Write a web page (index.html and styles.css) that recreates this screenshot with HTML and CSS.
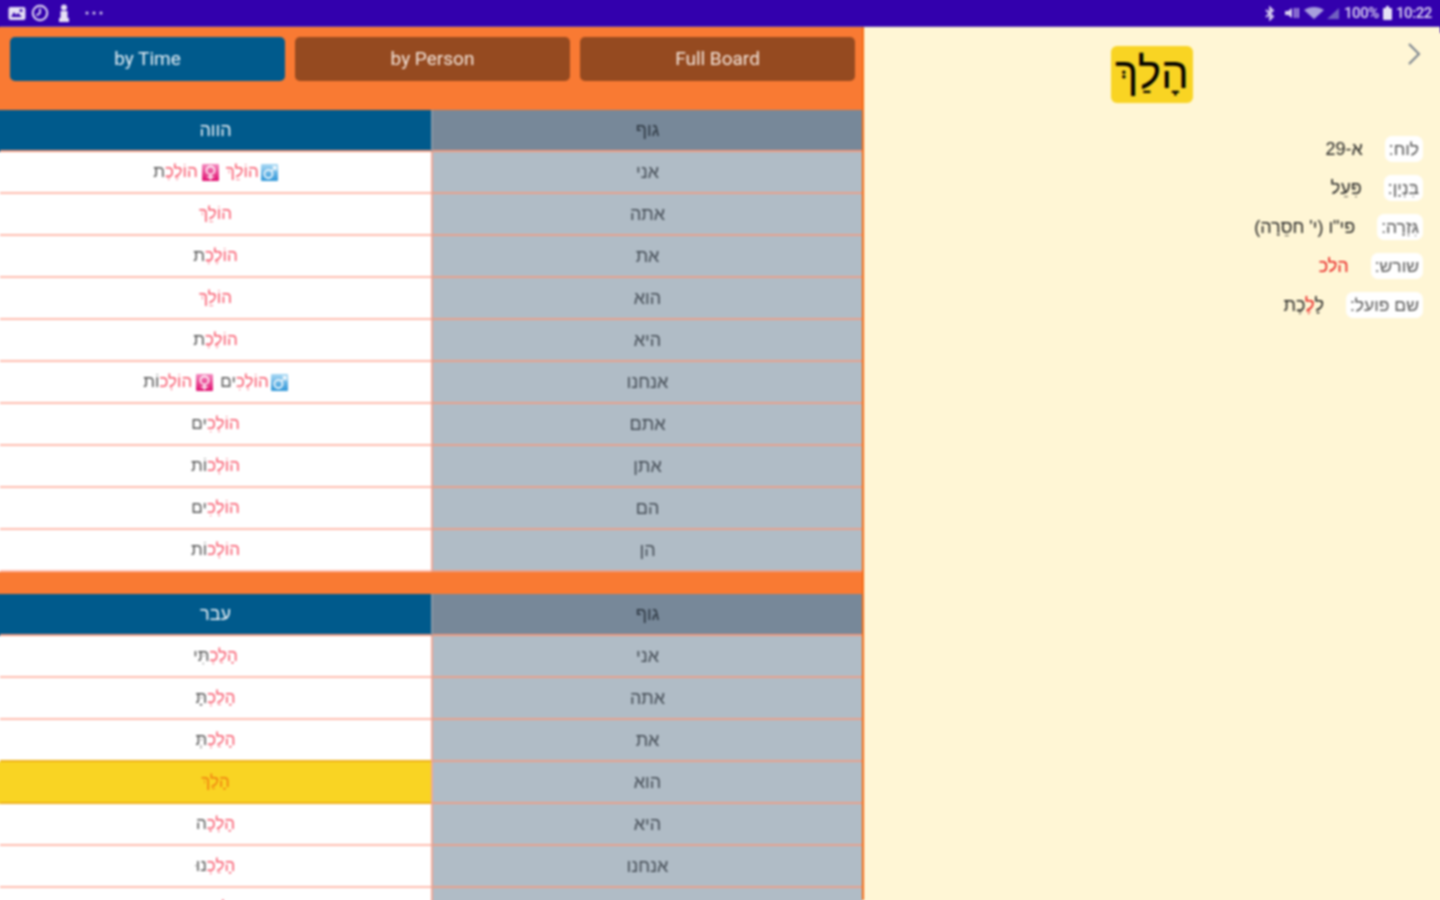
FILE: index.html
```html
<!DOCTYPE html>
<html lang="he">
<head>
<meta charset="utf-8">
<title>הלך</title>
<link rel="stylesheet" href="styles.css">
</head>
<body>
<div class="app">
  <header class="status">
    <div class="status-group">
      <svg class="ic" width="18" height="15" viewBox="0 0 18 15"><rect x="0.500" y="1" width="17" height="13" rx="2" fill="#e6e0f5"/><path d="M3 11l3-5 2 3 2-2 4 4z" fill="#3300ad"/><circle cx="13" cy="4.500" r="1.500" fill="#3300ad"/></svg>
      <svg class="ic" width="18" height="18" viewBox="0 0 18 18"><circle cx="9" cy="9" r="7.200" fill="none" stroke="#e6e0f5" stroke-width="2"/><path d="M9 4.500V9l-3.500 2.500" fill="none" stroke="#e6e0f5" stroke-width="1.800"/></svg>
      <svg class="ic person" width="12" height="18" viewBox="0 0 12 18"><circle cx="6" cy="3.500" r="3" fill="#e6e0f5"/><path d="M2.500 7h7v7H11v4H1v-4h1.500z" fill="#e6e0f5"/></svg>
      <svg class="dots" width="18" height="4" viewBox="0 0 18 4"><circle cx="2" cy="2" r="1.500" fill="#d8d0ee"/><circle cx="9" cy="2" r="1.500" fill="#d8d0ee"/><circle cx="16" cy="2" r="1.500" fill="#d8d0ee"/></svg>
    </div>
    <div class="status-group right">
      <svg class="bt" width="10" height="15" viewBox="0 0 10 15"><path d="M1 4l7 6.500-3 3V1.500l3 3L1 11" fill="none" stroke="#d8d0ee" stroke-width="1.800"/></svg>
      <svg class="mute" width="15" height="14" viewBox="0 0 15 14"><path d="M1 5h3l4-3v10L4 9H1z" fill="#d8d0ee"/><path d="M11 2v10M14 2v10" stroke="#d8d0ee" stroke-width="1.500"/></svg>
      <svg class="net" width="36" height="14" viewBox="0 0 36 14"><path d="M0 4c6-4 14-4 20 0l-10 9z" fill="#a89edc"/><path d="M23 13l12-11v11z" fill="#7060c0"/></svg>
      <span class="status-text">100%</span>
      <svg width="9" height="14" viewBox="0 0 9 14"><rect x="0" y="2" width="9" height="12" rx="1" fill="#e6e0f5"/><rect x="3" y="0" width="3" height="2" fill="#e6e0f5"/></svg>
      <span class="status-text">10:22</span>
    </div>
  </header>
  <div class="main">
    <section class="board">
      <nav class="tabs">
        <button class="tab active">by Time</button>
        <button class="tab">by Person</button>
        <button class="tab">Full Board</button>
      </nav>
      <div class="table">
        <div class="row head"><div class="who">גוף</div><div class="form">הווה</div></div>
        <div class="row"><div class="who">אני</div><div class="form">
          <svg class="g" viewBox="0 0 16 16"><defs><linearGradient id="b" x1="0" y1="0" x2="0" y2="1"><stop offset="0" stop-color="#a8d8f4"/><stop offset="1" stop-color="#2f96d8"/></linearGradient></defs><rect width="16" height="16" rx="1" fill="url(#b)"/><circle cx="7" cy="9.500" r="3.800" fill="none" stroke="#fff" stroke-width="1.500"/><path d="M10 6.500L14 2.500M10.500 2.500H14V6" fill="none" stroke="#fff" stroke-width="1.300"/></svg>
          <span class="r">הוֹלֵךְ</span>
          <svg class="g second" viewBox="0 0 16 16"><defs><linearGradient id="p" x1="0" y1="0" x2="0" y2="1"><stop offset="0" stop-color="#f48cc0"/><stop offset="1" stop-color="#e01070"/></linearGradient></defs><rect width="16" height="16" rx="1" fill="url(#p)"/><circle cx="8" cy="6" r="3.800" fill="none" stroke="#fff" stroke-width="1.500"/><path d="M8 10v5M5 12.500h6" fill="none" stroke="#fff" stroke-width="1.300"/></svg>
          <span><span class="r">הוֹלֶכֶ</span>ת</span>
        </div></div>
        <div class="row"><div class="who">אתה</div><div class="form"><span class="r">הוֹלֵךְ</span></div></div>
        <div class="row"><div class="who">את</div><div class="form"><span><span class="r">הוֹלֶכֶ</span>ת</span></div></div>
        <div class="row"><div class="who">הוא</div><div class="form"><span class="r">הוֹלֵךְ</span></div></div>
        <div class="row"><div class="who">היא</div><div class="form"><span><span class="r">הוֹלֶכֶ</span>ת</span></div></div>
        <div class="row"><div class="who">אנחנו</div><div class="form">
          <svg class="g" viewBox="0 0 16 16"><rect width="16" height="16" rx="1" fill="url(#b)"/><circle cx="7" cy="9.500" r="3.800" fill="none" stroke="#fff" stroke-width="1.500"/><path d="M10 6.500L14 2.500M10.500 2.500H14V6" fill="none" stroke="#fff" stroke-width="1.300"/></svg>
          <span><span class="r">הוֹלְכִ</span>ים</span>
          <svg class="g second" viewBox="0 0 16 16"><rect width="16" height="16" rx="1" fill="url(#p)"/><circle cx="8" cy="6" r="3.800" fill="none" stroke="#fff" stroke-width="1.500"/><path d="M8 10v5M5 12.500h6" fill="none" stroke="#fff" stroke-width="1.300"/></svg>
          <span><span class="r">הוֹלְכ</span>וֹת</span>
        </div></div>
        <div class="row"><div class="who">אתם</div><div class="form"><span><span class="r">הוֹלְכִ</span>ים</span></div></div>
        <div class="row"><div class="who">אתן</div><div class="form"><span><span class="r">הוֹלְכ</span>וֹת</span></div></div>
        <div class="row"><div class="who">הם</div><div class="form"><span><span class="r">הוֹלְכִ</span>ים</span></div></div>
        <div class="row"><div class="who">הן</div><div class="form"><span><span class="r">הוֹלְכ</span>וֹת</span></div></div>
      </div>
      <div class="table second-table">
        <div class="row head"><div class="who">גוף</div><div class="form">עבר</div></div>
        <div class="row"><div class="who">אני</div><div class="form"><span><span class="r">הָלַכְ</span>תִּי</span></div></div>
        <div class="row"><div class="who">אתה</div><div class="form"><span><span class="r">הָלַכְ</span>תָּ</span></div></div>
        <div class="row"><div class="who">את</div><div class="form"><span><span class="r">הָלַכְ</span>תְּ</span></div></div>
        <div class="row current"><div class="who">הוא</div><div class="form"><span class="o">הָלַךְ</span></div></div>
        <div class="row"><div class="who">היא</div><div class="form"><span><span class="r">הָלְכָ</span>ה</span></div></div>
        <div class="row"><div class="who">אנחנו</div><div class="form"><span><span class="r">הָלַכְ</span>נוּ</span></div></div>
        <div class="row"><div class="who">אתם</div><div class="form"><span><span class="r">הֲלַכְ</span>תֶּם</span></div></div>
      </div>
    </section>
    <aside class="details">
      <div class="details-top">
        <div class="word">הָלַךְ</div>
        <svg class="chevron" width="14" height="24" viewBox="0 0 14 24"><path d="M2 2l10 10L2 22" fill="none" stroke="#77808c" stroke-width="2"/></svg>
      </div>
      <dl class="info">
        <div class="info-row"><dt>לוח:</dt><dd>א-29</dd></div>
        <div class="info-row"><dt>בִּנְיָן:</dt><dd>פִּעֵל</dd></div>
        <div class="info-row"><dt>גִּזְרָה:</dt><dd>פי"ו (י' חסֵרָה)</dd></div>
        <div class="info-row"><dt>שורש:</dt><dd class="red">הלכ</dd></div>
        <div class="info-row"><dt>שם פועל:</dt><dd>לָ<span class="red">לֶ</span>כֶת</dd></div>
      </dl>
    </aside>
  </div>
</div>
</body>
</html>
```
FILE: styles.css
```css
* { box-sizing: border-box; }
html, body { margin: 0; height: 100%; overflow: hidden; }
body { font-family: "Liberation Sans", "DejaVu Sans", sans-serif; background: #fff6d5; }
.app { height: 900px; display: flex; flex-direction: column; filter: blur(0.8px); }

.status { height: 27px; flex: none; background: #3300ad; border-bottom: 1px solid #5a40b8; box-shadow: 0 0 0 6px #3300ad; display: flex; justify-content: space-between; align-items: center; padding: 0 8px 0 8px; color: #e0daf2; }
.status-group { display: flex; align-items: center; gap: 5px; }
.status-group.right { gap: 4px; }
.person { margin-left: 4px; }
.dots { margin-left: 10px; }
.mute { margin-left: 5px; }
.net { margin-left: 1px; }
.status-text { font-family: Roboto, sans-serif; font-size: 15px; font-weight: 500; letter-spacing: -0.4px; }

.main { flex: 1; display: flex; min-height: 0; }
.board { width: 864px; flex: none; background: #f97a33; border-right: 2px solid #f56a12; box-shadow: -6px 0 0 #f97a33; }
.tabs { display: flex; gap: 10px; padding: 10px 7px 29px 10px; }
.tab { flex: 1; height: 44px; border: 0; border-radius: 5px; background: #954a20; color: #f4e6dc; font-family: Roboto, sans-serif; font-size: 19px; padding: 0 0 2px; }
.tab.active { background: #005a8c; color: #e8f0f6; }

.table { direction: rtl; }
.second-table { margin-top: 22px; }
.row { display: grid; grid-template-columns: 431px 431px; height: 42px; }
.who, .form { display: flex; align-items: center; justify-content: center; font-size: 18px; }
.who { background: #b0bcc6; color: #444c55; border-bottom: 2px solid #e8a08c; border-left: 2px solid #f0a898; }
.form { background: #fff; color: #555; border-bottom: 2px solid #ffbcae; font-size: 17px; box-shadow: -6px 0 0 #fff; }
.r { color: #f8566a; }
.o { color: #f07c10; }
.head .who { background: #778899; color: #2c3640; border-left-color: #8a98a6; border-bottom-color: #f09a80; }
.head .form { background: #005a8c; color: #f0f4f8; border-bottom-color: #f09a80; font-size: 18px; box-shadow: -6px 0 0 #005a8c; }
.current .form { background: #f9d423; border-bottom-color: #eeb018; box-shadow: 0 -2px 0 #eeb018, -6px 0 0 #f9d423; }
.g { width: 17px; height: 17px; margin-left: 2px; flex: none; }
.g.second { margin-right: 7px; margin-left: 4px; }

.details { flex: 1; padding: 19px 17px 0 0; background: #fff6d5; }
.details-top { display: flex; direction: rtl; height: 57px; position: relative; }
.chevron { position: absolute; right: 2px; top: -4px; }
.word { position: absolute; left: 247px; top: 0; width: 82px; height: 57px; border-radius: 6px; background: #f9d423; color: #000; font-size: 44px; line-height: 54px; text-align: center; }
.info { direction: rtl; margin: 33px 0 0; display: flex; flex-direction: column; gap: 13px; }
.info-row { display: flex; align-items: center; gap: 22px; height: 26px; }
dt { background: #fff; border-radius: 7px; color: #555; font-size: 17.5px; padding: 1px 4px; height: 26px; line-height: 24px; }
dd { margin: 0; color: #222; font-size: 18px; }
dd.red, .red { color: #e81818; }
```
